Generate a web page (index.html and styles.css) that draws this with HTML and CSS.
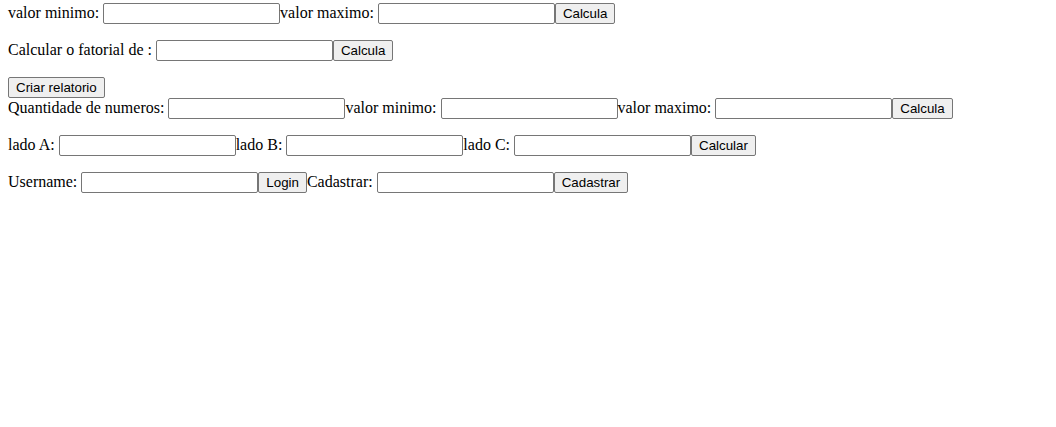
FILE: index.html
```html
<!DOCTYPE html>
<html lang="pt">
<head>
  <meta charset="UTF-8">
  <title>Exercicios</title>
  <link rel="stylesheet" href="styles.css">
</head>
<body>

  <!-- Intervalo -->
  <form class="linha">valor minimo: <input type="text"><span>valor maximo: </span><input type="text"><button type="button">Calcula</button></form>

  <!-- Fatorial -->
  <form class="linha">Calcular o fatorial de : <input type="text"><button type="button">Calcula</button></form>

  <!-- Relatorio -->
  <div class="relatorio"><button type="button">Criar relatorio</button></div>
  <form class="linha">Quantidade de numeros: <input type="text"><span>valor minimo: </span><input type="text"><span>valor maximo: </span><input type="text"><button type="button">Calcula</button></form>

  <!-- Triangulo -->
  <form class="linha">lado A: <input type="text"><span>lado B: </span><input type="text"><span>lado C: </span><input type="text"><button type="button">Calcular</button></form>

  <!-- Usuarios -->
  <form class="linha">Username: <input type="text"><button type="button">Login</button><span>Cadastrar: </span><input type="text"><button type="button">Cadastrar</button></form>

</body>
</html>
```

FILE: styles.css
```css
body {
  margin: 3px 8px 8px 8px;
  font-family: "Liberation Serif", "Times New Roman", serif;
  font-size: 16px;
  color: #000;
  background: #fff;
}

.linha {
  margin: 0 0 16px 0;
}

.relatorio {
  margin: 0;
}

input, button {
  font-family: "Liberation Sans", Arial, sans-serif;
  font-size: 13.3333px;
}

input {
  width: 177px;
  height: 21px;
  box-sizing: border-box;
  border: 1px solid #767676;
  border-radius: 2px;
  padding: 1px 2px;
}

button {
  height: 21px;
  box-sizing: border-box;
  padding: 1px 7px;
  background: #efefef;
  border: 1px solid #767676;
  border-radius: 2px;
  color: #000;
}
```
